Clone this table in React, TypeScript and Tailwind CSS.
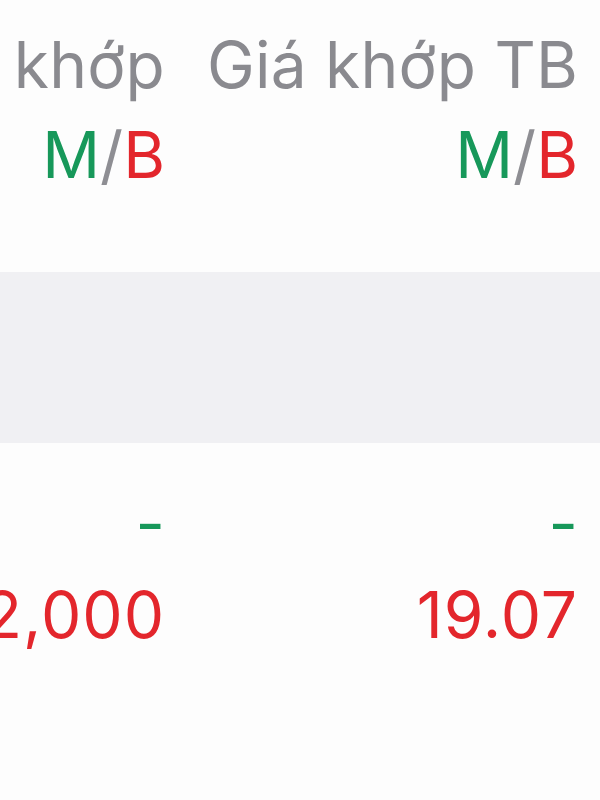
const COLS = [
  { title: "KL khớp", value: "2,000" },
  { title: "Giá khớp TB", value: "19.07" },
];

function MB() {
  return (
    <span>
      <span className="text-[#17985a]">M</span>
      <span className="text-[#8e8e93]">/</span>
      <span className="text-[#e3262c]">B</span>
    </span>
  );
}

export default function App() {
  return (
    <div className="w-[600px] h-[800px] overflow-hidden bg-[#fdfdfd] font-['Inter','Liberation_Sans',sans-serif] text-[64px]">
      <div className="grid grid-cols-[165px_1fr] pr-[22px] pt-[20px] leading-[90px]">
        {COLS.map((c) => (
          <div key={c.title} className="flex flex-col items-end">
            <div className="flex justify-end whitespace-nowrap tracking-[0.2px] text-[#8a8a8f]">{c.title}</div>
            <div className="flex justify-end whitespace-nowrap">
              <MB />
            </div>
          </div>
        ))}
      </div>

      <div className="mt-[72px] h-[171px] bg-[#f0f0f3]" />

      <div className="grid grid-cols-[165px_1fr] pr-[22px] pt-[28px]">
        {COLS.map((c) => (
          <div key={c.title} className="flex flex-col items-end">
            <div className="flex justify-end whitespace-nowrap leading-[104px] text-[#17985a]">-</div>
            <div className="flex justify-end whitespace-nowrap leading-[80px] tracking-[1px] text-[#e3262c]">{c.value}</div>
          </div>
        ))}
      </div>
    </div>
  );
}
